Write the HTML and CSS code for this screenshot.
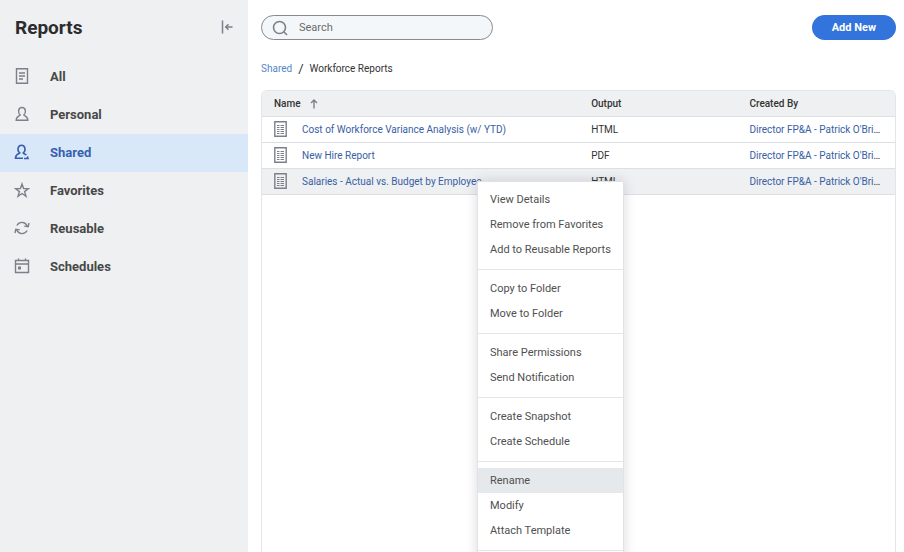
FILE: index.html
```html
<!DOCTYPE html>
<html lang="en">
<head>
  <meta charset="utf-8">
  <title>Reports</title>
  <link rel="stylesheet" href="styles.css">
</head>
<body>
  <div class="sidebar">
    <div class="sidebar-header">
      <h1>Reports</h1>
      <button class="collapse-btn" type="button" aria-label="Collapse">
        <svg width="12" height="14" viewBox="0 0 12 14">
          <path d="M1.500 .5v13M11.500 7H5M7.500 4.200L4.700 7l2.800 2.800" stroke-width="1.5"/>
        </svg>
      </button>
    </div>
    <ul class="nav">
      <li><a href="#all">
        <svg width="16" height="16" viewBox="0 0 16 16"><path d="M2.500 .8h11v14.400h-11zM5 5h6M5 8h6M5 11h4"/></svg>
        All</a></li>
      <li><a href="#personal">
        <svg width="16" height="16" viewBox="0 0 16 16"><path d="M6.200 9C3.800 7.200 3.800 1.500 8 1.500s4.200 5.700 1.800 7.500c.3.800 4 .8 4 5.300H2.200c0-4.500 3.700-4.500 4-5.300z"/></svg>
        Personal</a></li>
      <li class="active"><a href="#shared">
        <svg width="16" height="16" viewBox="0 0 16 16"><path d="M9 14.300H1.500c0-4.500 4-4.500 4.300-5.300C3.200 7.200 3.200 1.200 7.500 1.200s4.300 6 1.700 7.800c.2.800 2.300 1 3.200 2"/><path class="arrow" d="M10 13.700h2.300l1.700-2 1 3.500h-5z"/></svg>
        Shared</a></li>
      <li><a href="#favorites">
        <svg width="16" height="16" viewBox="0 0 16 16"><path d="M8 2l1.600 4.500 4.900.1-3.900 3 1.400 4.700L8 11.500l-4 2.800 1.400-4.700-3.900-3 4.900-.1z"/></svg>
        Favorites</a></li>
      <li><a href="#reusable">
        <svg width="16" height="16" viewBox="0 0 16 16"><path d="M2.800 5.500C5.500 1 11 1.500 13.300 6M13.200 10.500C10.500 15 5 14.500 2.700 10"/><path d="M15 3l-.8 3.700-3.900-.6M1 13l.8-3.700 3.900 .6"/></svg>
        Reusable</a></li>
      <li><a href="#schedules">
        <svg width="16" height="16" viewBox="0 0 16 16"><path d="M1.500 2.500h13v12h-13zM1.500 6h13M4.500 .5v2.500M11.500 .5v2.500"/><path class="solid" d="M4 8.500h3v3H4z"/></svg>
        Schedules</a></li>
    </ul>
  </div>

  <div class="content">
    <div class="toolbar">
      <label class="search">
        <svg width="16" height="16" viewBox="0 0 16 16"><circle cx="7.500" cy="7.500" r="6"/><path d="M12 12l3 3"/></svg>
        <input type="text" placeholder="Search" aria-label="Search">
      </label>
      <button class="add-btn" type="button">Add New</button>
    </div>

    <div class="breadcrumb">
      <a href="#shared">Shared</a>
      <span class="slash">/</span>
      <span>Workforce Reports</span>
    </div>

    <div class="table-wrap">
      <table>
        <thead>
          <tr>
            <th class="col-name">Name
              <svg class="sort" width="8" height="10" viewBox="0 0 8 10"><path d="M4 9.500V1.500M1 4l3-3 3 3"/></svg>
            </th>
            <th class="col-output">Output</th>
            <th class="col-created">Created By</th>
          </tr>
        </thead>
        <tbody>
          <tr>
            <td><a class="report" href="#r1">
              <svg width="13" height="16" viewBox="0 0 13 16"><path d="M.8 .8h11.400v14.400H.8z"/><path class="lines" d="M3 4.500h2.500M6.500 4.500H10M3 6.500h2.500M6.500 6.500H10M3 8.500h2.500M6.500 8.500H10M3 10.500h2.500M6.500 10.500H10M3 12.500h2.500M6.500 12.500H10"/></svg>
              Cost of Workforce Variance Analysis (w/ YTD)</a></td>
            <td>HTML</td>
            <td><a href="#user">Director FP&amp;A - Patrick O'Brien</a></td>
          </tr>
          <tr>
            <td><a class="report" href="#r2">
              <svg width="13" height="16" viewBox="0 0 13 16"><path d="M.8 .8h11.400v14.400H.8z"/><path class="lines" d="M3 4.500h2.500M6.500 4.500H10M3 6.500h2.500M6.500 6.500H10M3 8.500h2.500M6.500 8.500H10M3 10.500h2.500M6.500 10.500H10M3 12.500h2.500M6.500 12.500H10"/></svg>
              New Hire Report</a></td>
            <td>PDF</td>
            <td><a href="#user">Director FP&amp;A - Patrick O'Brien</a></td>
          </tr>
          <tr class="selected">
            <td><a class="report" href="#r3">
              <svg width="13" height="16" viewBox="0 0 13 16"><path d="M.8 .8h11.400v14.400H.8z"/><path class="lines" d="M3 4.500h2.500M6.500 4.500H10M3 6.500h2.500M6.500 6.500H10M3 8.500h2.500M6.500 8.500H10M3 10.500h2.500M6.500 10.500H10M3 12.500h2.500M6.500 12.500H10"/></svg>
              Salaries - Actual vs. Budget by Employee</a></td>
            <td>HTML</td>
            <td><a href="#user">Director FP&amp;A - Patrick O'Brien</a></td>
          </tr>
        </tbody>
      </table>
    </div>
  </div>

  <div class="context-menu">
    <button type="button">View Details</button>
    <button type="button">Remove from Favorites</button>
    <button type="button">Add to Reusable Reports</button>
    <hr>
    <button type="button">Copy to Folder</button>
    <button type="button">Move to Folder</button>
    <hr>
    <button type="button">Share Permissions</button>
    <button type="button">Send Notification</button>
    <hr>
    <button type="button">Create Snapshot</button>
    <button type="button">Create Schedule</button>
    <hr>
    <button type="button" class="hover">Rename</button>
    <button type="button">Modify</button>
    <button type="button">Attach Template</button>
    <hr>
  </div>
</body>
</html>
```

FILE: styles.css
```css
* {
  box-sizing: border-box;
}

body {
  margin: 0;
  height: 100vh;
  display: flex;
  position: relative;
  overflow: hidden;
  font-family: Roboto, "Liberation Sans", sans-serif;
  font-size: 10px;
  color: #333;
  background-color: #fff;
}

a {
  color: #3860a4;
  text-decoration: none;
}

button {
  font-family: inherit;
  border: none;
  cursor: pointer;
}

svg {
  flex: none;
  fill: none;
  stroke: #7b808a;
  stroke-width: 1.4;
}

/* Sidebar */
.sidebar {
  flex: none;
  width: 248px;
  background-color: #eef0f2;
}

.sidebar-header {
  display: flex;
  align-items: center;
  justify-content: space-between;
  height: 58px;
  padding: 0 15px 4px;
}

.sidebar-header h1 {
  margin: 0;
  font-size: 19px;
  font-weight: 700;
  color: #2c2c2e;
}

.collapse-btn {
  display: flex;
  padding: 0;
  background: none;
}

.nav {
  list-style-type: none;
  margin: 0;
  padding: 0;
}

.nav a {
  display: flex;
  align-items: center;
  gap: 20px;
  height: 38px;
  padding: 0 14px 2px;
  font-size: 13px;
  font-weight: 700;
  color: #484848;
}

.nav .active a {
  background-color: #d8e8f8;
  color: #3860b0;
}

.nav .active svg {
  stroke: #3860b0;
  stroke-width: 1.6;
}

.nav .solid {
  fill: #7b808a;
  stroke: none;
}

.nav .arrow {
  fill: #3860b0;
  stroke: none;
}

/* Main area */
.content {
  flex: 1;
  min-width: 0;
  display: flex;
  flex-direction: column;
  padding: 15px 8px 0 13px;
}

.toolbar {
  display: flex;
  justify-content: space-between;
  align-items: center;
}

.search {
  display: flex;
  align-items: center;
  gap: 11px;
  width: 232px;
  height: 25px;
  padding: 0 10px;
  border: 1px solid #868b90;
  border-radius: 13px;
  background-color: #f4f7f9;
}

.search svg {
  stroke-width: 1.6;
}

.search input {
  flex: 1;
  min-width: 0;
  padding: 0;
  border: none;
  outline: none;
  background: none;
  font-family: inherit;
  font-size: 11px;
}

.search input::placeholder {
  color: #6c6c6c;
}

.add-btn {
  height: 25px;
  padding: 0 20px;
  border-radius: 13px;
  background-color: #3273dc;
  color: #fff;
  font-size: 11px;
  font-weight: 700;
}

.breadcrumb {
  display: flex;
  align-items: center;
  gap: 6px;
  height: 16px;
  margin: 20px 0 14px;
}

.breadcrumb a {
  color: #5585cc;
}

.breadcrumb .slash {
  font-size: 13px;
}

/* Report list */
.table-wrap {
  flex: 1;
  border: 1px solid #e3e6e9;
  border-bottom: none;
  border-radius: 6px 6px 0 0;
  overflow: hidden;
}

table {
  width: 100%;
  table-layout: fixed;
  border-collapse: collapse;
}

th,
td {
  height: 26px;
  padding: 0 13px 0 0;
  border-bottom: 1px solid #dcdfe3;
  text-align: left;
  white-space: nowrap;
  overflow: hidden;
  text-overflow: ellipsis;
}

th {
  height: 25px;
  background-color: #eef0f2;
  font-weight: 500;
}

th:first-child,
td:first-child {
  padding-left: 12px;
}

.col-name {
  width: 52%;
}

.col-output {
  width: 25%;
}

.sort {
  margin-left: 7px;
  vertical-align: middle;
}

.report {
  display: flex;
  align-items: center;
  gap: 15px;
}

.report .lines {
  stroke-width: 1;
}

.selected td {
  background-color: #eef0f2;
}

/* Context menu */
.context-menu {
  position: absolute;
  top: 181px;
  left: 477px;
  width: 147px;
  padding: 5px 0;
  border: 1px solid #e0e2e5;
  background-color: #fff;
  box-shadow: 0 0 12px rgba(0, 0, 50, 0.15);
}

.context-menu button {
  display: block;
  width: 100%;
  height: 25px;
  padding: 0 12px;
  background: none;
  text-align: left;
  font-size: 11px;
  color: #505050;
  white-space: nowrap;
}

.context-menu .hover {
  background-color: #e5e9ec;
}

.context-menu hr {
  margin: 7px 0 6px;
  border: none;
  border-top: 1px solid #e3e5e8;
}
```
